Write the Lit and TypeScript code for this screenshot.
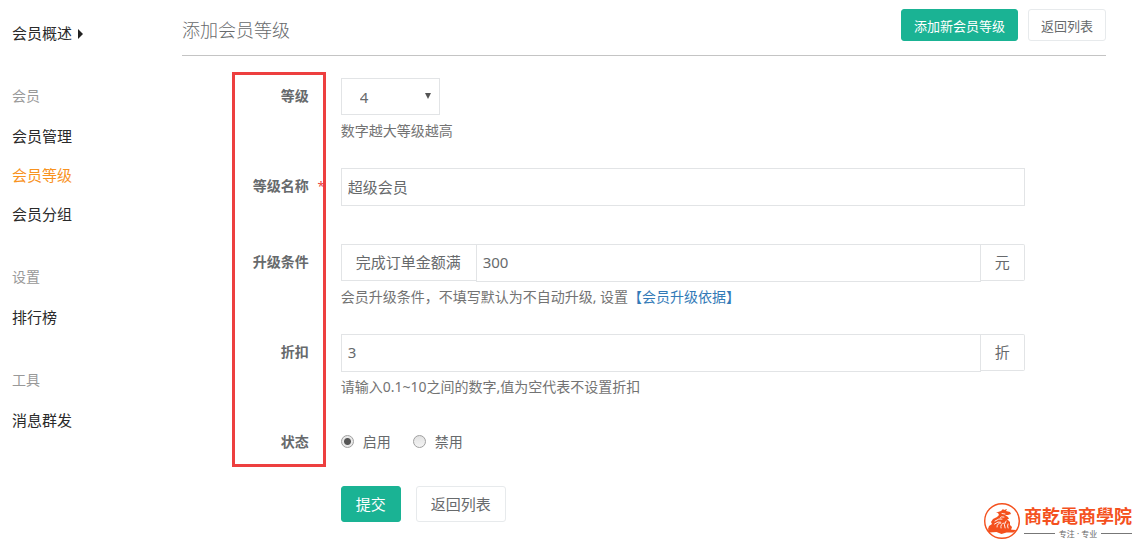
import { LitElement, html, svg, css } from "lit";
import { customElement, state } from "lit/decorators.js";
import { classMap } from "lit/directives/class-map.js";

interface NavGroup {
  title: string;
  items: string[];
}

const NAV: NavGroup[] = [
  { title: "会员", items: ["会员管理", "会员等级", "会员分组"] },
  { title: "设置", items: ["排行榜"] },
  { title: "工具", items: ["消息群发"] },
];

@customElement("side-nav")
export class SideNav extends LitElement {
  @state() private active = "会员等级";

  static styles = css`
    :host {
      display: block;
      padding: 14px 12px;
      font-size: 15px;
      color: #2a2a2a;
    }
    a {
      display: block;
      line-height: 39px;
      color: inherit;
      text-decoration: none;
    }
    a.active {
      color: #f8931f;
    }
    .overview {
      display: flex;
      align-items: center;
      gap: 6px;
    }
    .arrow {
      border-left: 5px solid #222;
      border-top: 5px solid transparent;
      border-bottom: 5px solid transparent;
    }
    h2 {
      margin: 22px 0 0;
      font-size: 14px;
      font-weight: 400;
      line-height: 42px;
      color: #999;
    }
    ul {
      margin: 0;
      padding: 0;
      list-style: none;
    }
  `;

  render() {
    return html`
      <nav>
        <a class="overview" href="#">会员概述<span class="arrow"></span></a>
        ${NAV.map(
          (g) => html`
            <h2>${g.title}</h2>
            <ul>
              ${g.items.map(
                (i) => html`<li>
                  <a
                    href="#"
                    class=${classMap({ active: i === this.active })}
                    @click=${() => (this.active = i)}
                    >${i}</a
                  >
                </li>`
              )}
            </ul>
          `
        )}
      </nav>
    `;
  }
}

@customElement("brand-mark")
export class BrandMark extends LitElement {
  static styles = css`
    :host {
      display: flex;
      align-items: center;
      gap: 3px;
      color: #f4511e;
    }
    svg {
      display: block;
      width: 38px;
      height: 38px;
    }
    .name {
      font-family: "Noto Sans CJK SC", sans-serif;
      font-size: 18px;
      font-weight: 700;
      line-height: 25px;
    }
    .tag {
      display: flex;
      align-items: center;
      gap: 4px;
      font-size: 8px;
      line-height: 11px;
      color: #666;
      white-space: nowrap;
    }
    .tag::before,
    .tag::after {
      content: "";
      flex: 1;
      height: 1px;
      background: #777;
    }
  `;

  render() {
    return html`
      ${svg`<svg viewBox="0 0 38 38" aria-hidden="true">
        <circle cx="19" cy="19" r="17.3" fill="none" stroke="currentColor" stroke-width="1.4"/>
        <path fill="currentColor" d="M15 10l3-1 2-2 1 1 3-1-1 2 4 1 1 2-3 1-3 0 3 2 1 2-2 0 3 3 0 3 2 2-1 3 1 1-20 1-2-2-2-1 1-3 3-2-1-2 2-3 4-2 2-2-1-2-2 0z"/>
        <path fill="currentColor" d="M4.500 27.500l5-1 4 2 6-1 6 0 8 .5-3 2.500-7 0-5 1.500-5-2-7 .500z"/>
        <path fill="none" stroke="#fff" stroke-width=".9" stroke-linecap="round" d="M12 19q4-3 7-2M11.500 22q4-3 6-2M14 25q0-4 4-4M18 26q-1-4 3-5M22 26q-2-3 1-7M25 26q-1-2 0-4M19 11.500l3 .5M21 15q-3-1-4 1"/>
      </svg>`}
      <div>
        <div class="name">商乾電商學院</div>
        <div class="tag">专注 · 专业</div>
      </div>
    `;
  }
}

@customElement("app-root")
export class AppRoot extends LitElement {
  @state() private enabled = true;

  static styles = css`
    :host {
      display: block;
      position: relative;
      min-height: 100vh;
      background: #fff;
      color: #676a6c;
      font-family: "Noto Sans", "Noto Sans CJK SC", sans-serif;
      font-size: 14px;
    }
    * {
      box-sizing: border-box;
    }
    .page {
      display: grid;
      grid-template-columns: 182px minmax(0, 1fr);
    }
    main {
      padding: 9px 32px 22px 0;
    }
    header {
      display: flex;
      align-items: flex-start;
      gap: 10px;
      padding-bottom: 4px;
      border-bottom: 1px solid #c4c4c4;
    }
    h1 {
      flex: 1;
      margin: 0;
      font-size: 18px;
      font-weight: 300;
      line-height: 42px;
    }
    button {
      height: 36px;
      padding: 0 14px 2px;
      border: 1px solid #e7eaec;
      border-radius: 3px;
      background: #fff;
      color: inherit;
      font-family: inherit;
      font-size: 15px;
      cursor: pointer;
    }
    button.small {
      height: 32px;
      padding: 0 12px;
      font-size: 13px;
    }
    button.primary {
      background: #1ab394;
      border-color: #1ab394;
      color: #fff;
    }
    form {
      margin: 22px -13px 0 -15px;
    }
    .fields {
      position: relative;
      display: grid;
      gap: 26px;
      margin-bottom: 26px;
    }
    .row {
      display: flex;
    }
    .label {
      width: 16.6667%;
      padding: 0 17px 0 0;
      font-weight: 700;
      line-height: 36px;
      text-align: right;
    }
    .label.required {
      position: relative;
    }
    .label.required::after {
      content: "*";
      position: absolute;
      right: 1px;
      color: #ed3f3f;
      font-size: 13px;
      font-weight: 400;
    }
    .control {
      width: 75%;
      padding: 0 15px;
    }
    .spaced {
      padding-bottom: 12px;
    }
    input,
    select {
      font-family: inherit;
      font-size: 15px;
      color: inherit;
    }
    .text {
      display: block;
      width: 100%;
      height: 38px;
      padding: 0 6px 2px;
      border: 1px solid #e2e4e6;
      border-radius: 0;
      background: #fff;
      outline: none;
    }
    .select {
      position: relative;
      width: 99px;
      height: 38px;
    }
    .select select {
      appearance: none;
      display: block;
      width: 100%;
      height: 37px;
      padding: 0 18px;
      border: 1px solid #e2e4e6;
      border-radius: 0;
      background: #fff;
    }
    .select::after {
      content: "";
      position: absolute;
      top: 15px;
      right: 9px;
      border-top: 6px solid #555;
      border-left: 3px solid transparent;
      border-right: 3px solid transparent;
      pointer-events: none;
    }
    .group {
      display: flex;
      align-items: flex-start;
    }
    .group .text {
      flex: 1;
      min-width: 0;
    }
    .addon {
      height: 37px;
      padding: 0 14px;
      border: 1px solid #e2e4e6;
      font-size: 15px;
      line-height: 35px;
    }
    .addon.before {
      padding-right: 15px;
      border-right: 0;
    }
    .addon.after {
      border-left: 0;
      border-radius: 0 2px 2px 0;
    }
    .hint {
      margin: 4px 0 0;
      line-height: 22px;
      color: #737373;
    }
    .hint a {
      color: #337ab7;
      text-decoration: none;
    }
    .radios {
      display: flex;
      gap: 22px;
      height: 34px;
    }
    .radios label {
      display: flex;
      align-items: center;
      gap: 9px;
    }
    .radios input {
      appearance: none;
      width: 13px;
      height: 13px;
      margin: 0;
      border: 1px solid #a0a0a0;
      border-radius: 50%;
      background: linear-gradient(#e2e2e2, #f4f4f4);
    }
    .radios input:checked {
      background: radial-gradient(circle, #555 0 3px, #e9e9e9 4px);
    }
    .marker {
      position: absolute;
      top: -6px;
      bottom: -7px;
      left: 65px;
      width: 94px;
      border: 3px solid #ed3f3f;
      pointer-events: none;
    }
    .actions {
      display: flex;
      gap: 15px;
      margin-left: 16.6667%;
      padding: 0 15px;
    }
    brand-mark {
      position: absolute;
      right: 6px;
      bottom: 4px;
    }
  `;

  render() {
    return html`
      <div class="page">
        <side-nav></side-nav>
        <main>
          <header>
            <h1>添加会员等级</h1>
            <button class="small primary" type="button">添加新会员等级</button>
            <button class="small" type="button">返回列表</button>
          </header>
          <form @submit=${(e: Event) => e.preventDefault()}>
            <div class="fields">
              <div class="row">
                <label class="label" for="level">等级</label>
                <div class="control">
                  <div class="select">
                    <select id="level">
                      ${[1, 2, 3, 4, 5].map(
                        (n) => html`<option ?selected=${n === 4}>${n}</option>`
                      )}
                    </select>
                  </div>
                  <p class="hint">数字越大等级越高</p>
                </div>
              </div>
              <div class="row">
                <label class="label required" for="name">等级名称</label>
                <div class="control spaced">
                  <input class="text" id="name" type="text" value="超级会员" />
                </div>
              </div>
              <div class="row">
                <label class="label" for="amount">升级条件</label>
                <div class="control">
                  <div class="group">
                    <span class="addon before">完成订单金额满</span>
                    <input class="text" id="amount" type="text" value="300" />
                    <span class="addon after">元</span>
                  </div>
                  <p class="hint">
                    会员升级条件，不填写默认为不自动升级, 设置<a href="#">【会员升级依据】</a>
                  </p>
                </div>
              </div>
              <div class="row">
                <label class="label" for="discount">折扣</label>
                <div class="control">
                  <div class="group">
                    <input class="text" id="discount" type="text" value="3" />
                    <span class="addon after">折</span>
                  </div>
                  <p class="hint">请输入0.1~10之间的数字,值为空代表不设置折扣</p>
                </div>
              </div>
              <div class="row">
                <span class="label" id="status">状态</span>
                <div class="control">
                  <div class="radios" role="radiogroup" aria-labelledby="status">
                    <label>
                      <input
                        type="radio"
                        name="status"
                        .checked=${this.enabled}
                        @change=${() => (this.enabled = true)}
                      />启用
                    </label>
                    <label>
                      <input
                        type="radio"
                        name="status"
                        .checked=${!this.enabled}
                        @change=${() => (this.enabled = false)}
                      />禁用
                    </label>
                  </div>
                </div>
              </div>
              <div class="marker"></div>
            </div>
            <div class="actions">
              <button class="primary" type="submit">提交</button>
              <button type="button">返回列表</button>
            </div>
          </form>
        </main>
      </div>
      <brand-mark></brand-mark>
    `;
  }
}
